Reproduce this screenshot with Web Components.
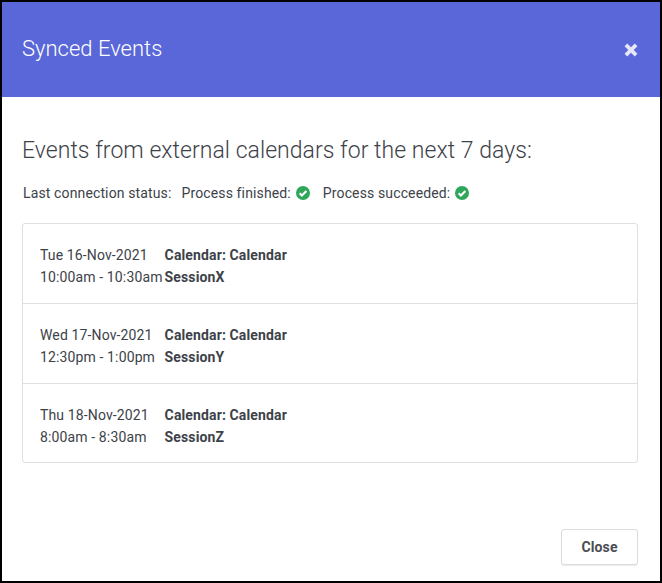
<!DOCTYPE html>
<html><head><meta charset="utf-8">
<style>
html,body{margin:0;padding:0;background:#000}
body{width:662px;height:583px;font-family:Roboto,sans-serif}
</style></head>
<body>
<synced-dialog heading="Synced Events">
  <h-sub slot="sub">Events from external calendars for the next 7 days:</h-sub>
  <status-line slot="status"></status-line>
  <event-card slot="list">
    <event-row date="Tue 16-Nov-2021" time="10:00am - 10:30am" cal="Calendar: Calendar" name="SessionX"></event-row>
    <event-row date="Wed 17-Nov-2021" time="12:30pm - 1:00pm" cal="Calendar: Calendar" name="SessionY"></event-row>
    <event-row date="Thu 18-Nov-2021" time="8:00am - 8:30am" cal="Calendar: Calendar" name="SessionZ"></event-row>
  </event-card>
</synced-dialog>
<script>
const check='<svg width="14" height="14" viewBox="0 0 14 14"><circle cx="7" cy="7" r="7" fill="#2fa65a"/><path d="M3.6 7.3 5.9 9.6 10.4 5" fill="none" stroke="#fff" stroke-width="2.1"/></svg>';
function def(name,html){customElements.define(name,class extends HTMLElement{
  connectedCallback(){if(this.shadowRoot)return;const r=this.attachShadow({mode:'open'});
  r.innerHTML=typeof html==='function'?html(this):html;}
});}
def('synced-dialog',h=>`<style>
:host{display:flex;flex-direction:column;box-sizing:border-box;width:662px;height:583px;border:2px solid #000;background:#fff;color:#3d4249}
header{flex:none;height:95px;background:#5967d8;display:flex;align-items:center;justify-content:space-between;padding:0 22px 0 20px;color:#fff}
h1{margin:0;font:300 22px/26px Roboto,sans-serif;position:relative;top:-1px}
svg{display:block}
main{flex:1;padding:40px 22px 0 20px;display:flex;flex-direction:column}
footer{flex:none;display:flex;justify-content:flex-end;padding:0 22px 16px 20px}
button{width:77px;height:36px;box-sizing:border-box;background:#fff;border:1px solid #dcdcdc;border-radius:3px;box-shadow:0 1px 1px rgba(0,0,0,.08);font:700 14px Roboto,sans-serif;letter-spacing:.13px;color:#4a4d52;padding:0}
</style>
<header><h1>${h.getAttribute('heading')}</h1>
<svg width="14" height="14" viewBox="0 0 14 14" aria-label="close"><path d="M1.9 1.9 12.1 12.1M12.1 1.9 1.9 12.1" stroke="#e6e8f9" stroke-width="3.8" fill="none"/></svg></header>
<main><slot name="sub"></slot><slot name="status"></slot><slot name="list"></slot></main>
<footer><button>Close</button></footer>`);
def('h-sub',`<style>:host{display:block;font:300 23px/28px Roboto,sans-serif;letter-spacing:.04px;color:#3d4249;margin-bottom:20px}</style><slot></slot>`);
def('status-line',`<style>:host{display:flex;align-items:center;font:400 14px/16px Roboto,sans-serif;letter-spacing:.13px;color:#3d4249;margin-bottom:22px;padding-left:1px}
span{white-space:pre}svg{display:block;margin-left:5px}.a{margin-right:10px}</style>
<span class="a">Last connection status:</span><span>Process finished:</span>${check}<span style="width:13px"></span><span>Process succeeded:</span>${check}`);
def('event-card',`<style>:host{display:block;border:1px solid #dfdfdf;border-radius:3px;background:#fff}</style><slot></slot>`);
def('event-row',h=>`<style>:host{display:grid;grid-template-columns:124.6px 1fr;box-sizing:border-box;height:80px;padding:20px 17px 0;border-bottom:1px solid #dfdfdf;font:400 14px/22px Roboto,sans-serif;letter-spacing:.13px;color:#3d4249}
:host(:last-child){border-bottom:0;height:78px}
b{font-weight:700}div{white-space:nowrap}</style>
<div>${h.getAttribute('date')}<br>${h.getAttribute('time')}</div><div><b>${h.getAttribute('cal')}</b><br><b>${h.getAttribute('name')}</b></div>`);
</script>
</body></html>
